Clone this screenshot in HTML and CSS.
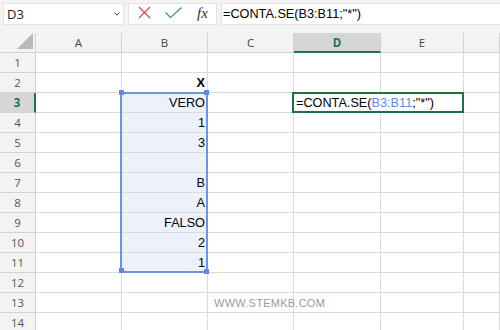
FILE: index.html
```html
<!DOCTYPE html>
<html>
<head>
<meta charset="utf-8">
<link rel="stylesheet" href="styles.css">
</head>
<body>
<div class="app">
  <div class="toolbar">
    <div class="namebox"><span class="nb-text">D3</span><svg class="chev" width="6" height="4" viewBox="0 0 6 4"><path d="M0.5 0.5 L3 3.2 L5.5 0.5" fill="none" stroke="#444" stroke-width="1"/></svg></div>
    <div class="fxbox">
      <svg class="ic-x" width="13" height="13" viewBox="0 0 13 13"><path d="M1 1L12 12M12 1L1 12" stroke="#e2453c" stroke-width="1.2" fill="none"/></svg>
      <svg class="ic-ok" width="17" height="12" viewBox="0 0 17 12"><path d="M0.5 5.5 L5.5 10.5 L16.5 0.5" stroke="#3aa14f" stroke-width="1.2" fill="none"/></svg>
      <span class="fx">fx</span>
    </div>
    <div class="formula">=CONTA.SE(B3:B11;"*")</div>
  </div>
  <div class="sheet">
    <div class="cell hd corner"><svg width="16" height="17" viewBox="0 0 16 17"><polygon points="16,0 16,16 0,16" fill="#b9b9b9"/></svg></div>
    <div class="cell hd">A</div><div class="cell hd">B</div><div class="cell hd">C</div><div class="cell hd hd-sel">D</div><div class="cell hd">E</div><div class="cell hd"></div>

    <div class="cell rh">1</div><div class="cell"></div><div class="cell"></div><div class="cell"></div><div class="cell"></div><div class="cell"></div><div class="cell"></div>
    <div class="cell rh">2</div><div class="cell"></div><div class="cell bold">X</div><div class="cell"></div><div class="cell"></div><div class="cell"></div><div class="cell"></div>
    <div class="cell rh rh-sel">3</div><div class="cell"></div><div class="cell hl">VERO</div><div class="cell"></div><div class="cell"></div><div class="cell"></div><div class="cell"></div>
    <div class="cell rh">4</div><div class="cell"></div><div class="cell hl">1</div><div class="cell"></div><div class="cell"></div><div class="cell"></div><div class="cell"></div>
    <div class="cell rh">5</div><div class="cell"></div><div class="cell hl">3</div><div class="cell"></div><div class="cell"></div><div class="cell"></div><div class="cell"></div>
    <div class="cell rh">6</div><div class="cell"></div><div class="cell hl"></div><div class="cell"></div><div class="cell"></div><div class="cell"></div><div class="cell"></div>
    <div class="cell rh">7</div><div class="cell"></div><div class="cell hl">B</div><div class="cell"></div><div class="cell"></div><div class="cell"></div><div class="cell"></div>
    <div class="cell rh">8</div><div class="cell"></div><div class="cell hl">A</div><div class="cell"></div><div class="cell"></div><div class="cell"></div><div class="cell"></div>
    <div class="cell rh">9</div><div class="cell"></div><div class="cell hl">FALSO</div><div class="cell"></div><div class="cell"></div><div class="cell"></div><div class="cell"></div>
    <div class="cell rh">10</div><div class="cell"></div><div class="cell hl">2</div><div class="cell"></div><div class="cell"></div><div class="cell"></div><div class="cell"></div>
    <div class="cell rh">11</div><div class="cell"></div><div class="cell hl">1</div><div class="cell"></div><div class="cell"></div><div class="cell"></div><div class="cell"></div>
    <div class="cell rh">12</div><div class="cell"></div><div class="cell"></div><div class="cell"></div><div class="cell"></div><div class="cell"></div><div class="cell"></div>
    <div class="cell rh">13</div><div class="cell"></div><div class="cell"></div><div class="cell"></div><div class="cell"></div><div class="cell"></div><div class="cell"></div>
    <div class="cell rh">14</div><div class="cell"></div><div class="cell"></div><div class="cell"></div><div class="cell"></div><div class="cell"></div><div class="cell"></div>
  </div>
  <div class="sel">
    <span class="hdl tl"></span><span class="hdl tr"></span><span class="hdl bl"></span><span class="hdl br"></span>
  </div>
  <div class="edit">=CONTA.SE(<span class="ref">B3:B11</span>;"*")</div>
  <div class="wm">WWW.STEMKB.COM</div>
</div>
</body>
</html>
```
FILE: styles.css
```css
html, body {
  margin: 0;
  padding: 0;
  background: #fff;
}
body {
  width: 500px;
  height: 330px;
  overflow: hidden;
}
.app {
  position: relative;
  width: 500px;
  height: 330px;
  overflow: hidden;
  font-family: "Liberation Sans", Arial, sans-serif;
  color: #000;
}
.toolbar {
  display: flex;
  height: 33px;
  box-sizing: border-box;
  padding: 3px 0 0 3px;
  gap: 4px;
  background: #f3f3f3;
}
.namebox {
  width: 121px;
  height: 22px;
  box-sizing: border-box;
  background: #fff;
  border: 1px solid #e3e3e3;
  display: flex;
  align-items: center;
  justify-content: space-between;
  padding: 0 3px 0 3px;
}
.nb-text {
  font-family: "Open Sans", sans-serif;
  font-size: 13px;
  line-height: 20px;
  color: #222;
}
.chev {
  display: block;
}
.fxbox {
  width: 89px;
  height: 22px;
  box-sizing: border-box;
  background: #fff;
  border: 1px solid #e3e3e3;
  display: flex;
  align-items: center;
  padding-left: 9px;
}
.ic-x {
  display: block;
  margin-top: -4px;
}
.ic-ok {
  display: block;
  margin-left: 14px;
  margin-top: -3px;
}
.fx {
  margin-left: 15px;
  font-family: "Liberation Serif", serif;
  font-style: italic;
  font-size: 15px;
  line-height: 20px;
  color: #333;
  margin-top: -3px;
}
.formula {
  flex: 1;
  height: 22px;
  box-sizing: border-box;
  background: #fff;
  border: 1px solid #e3e3e3;
  border-right: none;
  padding-left: 1px;
  font-size: 12.7px;
  line-height: 20px;
  white-space: nowrap;
}
.sheet {
  display: grid;
  grid-template-columns: 36px 86px 86px 86px 87px 83px 1fr;
  grid-auto-rows: 20px;
}
.cell {
  box-sizing: border-box;
  border-right: 1px solid #dadada;
  border-bottom: 1px solid #dadada;
  font-size: 12.7px;
  line-height: 18px;
  padding: 1px 2px 0 0;
  text-align: right;
  white-space: nowrap;
  overflow: hidden;
}
.bold {
  font-weight: bold;
}
.hl {
  background: #edf1fb;
}
.hd {
  background: #f3f3f3;
  border-color: #d2d2d2;
  font-family: "Open Sans", sans-serif;
  font-size: 11.5px;
  line-height: 19px;
  padding: 0;
  text-align: center;
  color: #444;
}
.hd-sel {
  background: #d6d6d6;
  color: #217346;
  font-weight: bold;
  border-bottom: 2px solid #217346;
}
.corner {
  display: flex;
  align-items: flex-end;
  justify-content: flex-end;
  padding: 0 2px 2px 0;
}
.corner svg {
  display: block;
}
.rh {
  background: #f3f3f3;
  border-color: #d2d2d2;
  font-family: "Open Sans", sans-serif;
  font-size: 11.5px;
  line-height: 19px;
  padding: 0;
  text-align: center;
  color: #555;
}
.rh-sel {
  background: #d6d6d6;
  color: #217346;
  font-weight: bold;
  border-right: 2px solid #217346;
}
.sel {
  position: absolute;
  left: 120px;
  top: 92px;
  width: 88px;
  height: 181px;
  box-sizing: border-box;
  border: 2px solid #6b93e6;
}
.hdl {
  position: absolute;
  width: 5px;
  height: 5px;
  background: #5d89e2;
}
.tl { left: -3px; top: -4px; }
.tr { left: 82px; top: -4px; }
.bl { left: -3px; top: 174px; }
.br { left: 82px; top: 175px; }
.edit {
  position: absolute;
  left: 292px;
  top: 92px;
  width: 172px;
  height: 21px;
  box-sizing: border-box;
  border: 2px solid #1e7145;
  background: #fff;
  padding: 1px 0 0 2px;
  font-size: 12.7px;
  line-height: 16px;
  white-space: nowrap;
}
.ref {
  color: #5b8ee6;
}
.wm {
  position: absolute;
  left: 214px;
  top: 297px;
  font-size: 11px;
  line-height: 13px;
  letter-spacing: 0.25px;
  color: #9a9a9a;
  white-space: nowrap;
}
```
